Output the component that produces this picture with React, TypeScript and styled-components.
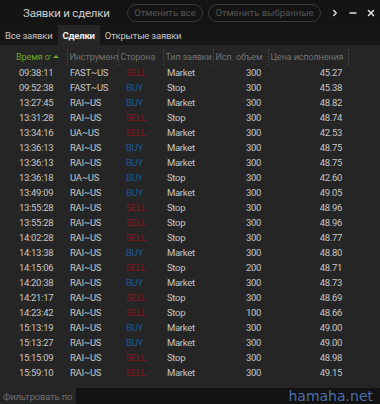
import React from "react";
import styled, { createGlobalStyle } from "styled-components";
import { ChevronRight, Minus, X } from "lucide-react";

const Global = createGlobalStyle`
  html, body {
    margin: 0;
    padding: 0;
    background: #252525;
    overflow: hidden;
  }
  body {
    font-family: Roboto, "Noto Sans", sans-serif;
  }
`;

type Side = "SELL" | "BUY";
type Deal = { time: string; inst: string; side: Side; type: string; qty: number; price: string };

const deals: Deal[] = [
  { time: "09:38:11", inst: "FAST~US", side: "SELL", type: "Market", qty: 300, price: "45.27" },
  { time: "09:52:38", inst: "FAST~US", side: "BUY", type: "Stop", qty: 300, price: "45.38" },
  { time: "13:27:45", inst: "RAI~US", side: "BUY", type: "Market", qty: 300, price: "48.82" },
  { time: "13:31:28", inst: "RAI~US", side: "SELL", type: "Stop", qty: 300, price: "48.74" },
  { time: "13:34:16", inst: "UA~US", side: "SELL", type: "Market", qty: 300, price: "42.53" },
  { time: "13:36:13", inst: "RAI~US", side: "BUY", type: "Market", qty: 300, price: "48.75" },
  { time: "13:36:13", inst: "RAI~US", side: "BUY", type: "Market", qty: 300, price: "48.75" },
  { time: "13:36:18", inst: "UA~US", side: "BUY", type: "Stop", qty: 300, price: "42.60" },
  { time: "13:49:09", inst: "RAI~US", side: "BUY", type: "Market", qty: 300, price: "49.05" },
  { time: "13:55:28", inst: "RAI~US", side: "SELL", type: "Stop", qty: 300, price: "48.96" },
  { time: "13:55:28", inst: "RAI~US", side: "SELL", type: "Stop", qty: 300, price: "48.96" },
  { time: "14:02:28", inst: "RAI~US", side: "SELL", type: "Stop", qty: 300, price: "48.77" },
  { time: "14:13:38", inst: "RAI~US", side: "BUY", type: "Market", qty: 300, price: "48.80" },
  { time: "14:15:06", inst: "RAI~US", side: "SELL", type: "Stop", qty: 200, price: "48.71" },
  { time: "14:20:38", inst: "RAI~US", side: "BUY", type: "Market", qty: 300, price: "48.73" },
  { time: "14:21:17", inst: "RAI~US", side: "SELL", type: "Stop", qty: 300, price: "48.69" },
  { time: "14:23:42", inst: "RAI~US", side: "SELL", type: "Stop", qty: 100, price: "48.66" },
  { time: "15:13:19", inst: "RAI~US", side: "BUY", type: "Market", qty: 300, price: "49.00" },
  { time: "15:13:27", inst: "RAI~US", side: "BUY", type: "Market", qty: 300, price: "49.00" },
  { time: "15:15:09", inst: "RAI~US", side: "SELL", type: "Stop", qty: 300, price: "48.98" },
  { time: "15:59:10", inst: "RAI~US", side: "SELL", type: "Market", qty: 300, price: "49.15" },
];

const Window = styled.div`
  width: 380px;
  height: 404px;
  display: flex;
  flex-direction: column;
  background: #252525;
  overflow: hidden;
`;

const TitleBar = styled.div`
  width: 380px;
  box-sizing: border-box;
  height: 25px;
  flex: none;
  display: flex;
  align-items: center;
  background: #141414;
  padding-left: 23px;
  padding-right: 4px;
`;

const Title = styled.div`
  flex: none;
  white-space: nowrap;
  color: #cfcfcf;
  font-size: 11.5px;
  letter-spacing: -0.2px;
  margin-right: auto;
`;

const PillButton = styled.button<{ $w: number }>`
  flex: none;
  width: ${(p) => p.$w}px;
  white-space: nowrap;
  height: 18px;
  margin-left: 5px;
  padding: 0;
  border: 1px solid #3a3a3a;
  border-radius: 9px;
  background: transparent;
  color: #555555;
  font-family: inherit;
  font-size: 9.5px;
  line-height: 16px;
  text-align: center;
`;

const WinButton = styled.div<{ $ml: number }>`
  flex: none;
  width: 10px;
  height: 10px;
  margin-left: ${(p) => p.$ml}px;
  display: flex;
  align-items: center;
  justify-content: center;
  color: #e0e0e0;
`;

const Tabs = styled.div`
  height: 20px;
  flex: none;
  display: flex;
  background: #161616;
`;

const Tab = styled.div<{ $active?: boolean }>`
  padding: 0 5px;
  display: flex;
  align-items: center;
  white-space: nowrap;
  font-size: 9.5px;
  letter-spacing: -0.2px;
  color: ${(p) => (p.$active ? "#f0f0f0" : "#c4c4c4")};
  font-weight: ${(p) => (p.$active ? 700 : 400)};
  background: ${(p) => (p.$active ? "#262626" : "transparent")};
`;

const Grid = styled.div`
  flex: 1;
  padding-top: 4px;
  background: #252525;
`;

const Table = styled.table`
  border-collapse: collapse;
  table-layout: fixed;
  width: 348px;
  font-size: 9.5px;
  letter-spacing: -0.3px;
`;

const Th = styled.th<{ $sorted?: boolean }>`
  height: 16px;
  padding: 0 0 0 2px;
  text-align: left;
  font-weight: 400;
  font-size: 9px;
  letter-spacing: -0.1px;
  white-space: nowrap;
  overflow: hidden;
  color: ${(p) => (p.$sorted ? "#6fa52a" : "#727272")};
  border-right: 1px dotted #4a4a4a;
`;

const SortMark = styled.span`
  display: inline-block;
  width: 0;
  height: 0;
  margin-left: 2px;
  vertical-align: 2px;
  border-left: 3px solid transparent;
  border-right: 3px solid transparent;
  border-bottom: 3px solid #6fa52a;
`;

const HeadInner = styled.span`
  display: inline-block;
  vertical-align: bottom;
  overflow: hidden;
  white-space: nowrap;
`;

const Td = styled.td<{ $align?: "left" | "right"; $pl?: number; $pr?: number; $color?: string }>`
  height: 15px;
  padding: 0 ${(p) => p.$pr ?? 0}px 0 ${(p) => p.$pl ?? 0}px;
  text-align: ${(p) => p.$align ?? "left"};
  color: ${(p) => p.$color ?? "#c6c6c6"};
  white-space: nowrap;
  line-height: 15px;
`;

const FilterBar = styled.div`
  height: 16px;
  flex: none;
  display: flex;
  align-items: center;
  background: #252525;
`;

const FilterLabel = styled.div`
  flex: none;
  width: 76px;
  padding-left: 3px;
  box-sizing: border-box;
  white-space: nowrap;
  overflow: hidden;
  font-size: 9.5px;
  letter-spacing: -0.2px;
  color: #6e6e6e;
`;

const FilterInput = styled.div`
  flex: 1;
  height: 16px;
  background: #121212;
  display: flex;
  justify-content: flex-end;
  align-items: center;
  padding-right: 7px;
`;

const Watermark = styled.span`
  font-family: "DejaVu Sans", sans-serif;
  font-size: 14px;
  color: #4b6fae;
`;

const sideColor = (s: Side) => (s === "SELL" ? "#7e1821" : "#1d5690");

const App = () => {
  return (
    <Window>
      <Global />
      <TitleBar>
        <Title>Заявки и сделки</Title>
        <PillButton $w={76}>Отменить все</PillButton>
        <PillButton $w={113}>Отменить выбранные</PillButton>
        <WinButton $ml={9}>
          <ChevronRight size={10} strokeWidth={3.5} />
        </WinButton>
        <WinButton $ml={8}>
          <Minus size={10} strokeWidth={4} />
        </WinButton>
        <WinButton $ml={8}>
          <X size={10} strokeWidth={3.5} />
        </WinButton>
      </TitleBar>
      <Tabs>
        <Tab>Все заявки</Tab>
        <Tab $active>Сделки</Tab>
        <Tab>Открытые заявки</Tab>
      </Tabs>
      <Grid>
        <Table>
          <colgroup>
            <col style={{ width: 67 }} />
            <col style={{ width: 51 }} />
            <col style={{ width: 45 }} />
            <col style={{ width: 50 }} />
            <col style={{ width: 55 }} />
            <col style={{ width: 80 }} />
          </colgroup>
          <thead>
            <tr>
              <Th $sorted style={{ paddingLeft: 16 }}>
                <HeadInner style={{ maxWidth: 35 }}>Время от</HeadInner>
                <SortMark />
              </Th>
              <Th>Инструмент</Th>
              <Th>Сторона</Th>
              <Th>Тип заявки</Th>
              <Th>Исп. объем</Th>
              <Th>Цена исполнения</Th>
            </tr>
          </thead>
          <tbody>
            {deals.map((d, i) => (
              <tr key={i}>
                <Td $pl={19}>{d.time}</Td>
                <Td $pl={3}>{d.inst}</Td>
                <Td $pl={8} $color={sideColor(d.side)}>{d.side}</Td>
                <Td $pl={4}>{d.type}</Td>
                <Td $align="right" $pr={7}>{d.qty}</Td>
                <Td $align="right" $pr={6}>{d.price}</Td>
              </tr>
            ))}
          </tbody>
        </Table>
      </Grid>
      <FilterBar>
        <FilterLabel>Фильтровать по</FilterLabel>
        <FilterInput>
          <Watermark>hamaha.net</Watermark>
        </FilterInput>
      </FilterBar>
    </Window>
  );
};

export default App;
